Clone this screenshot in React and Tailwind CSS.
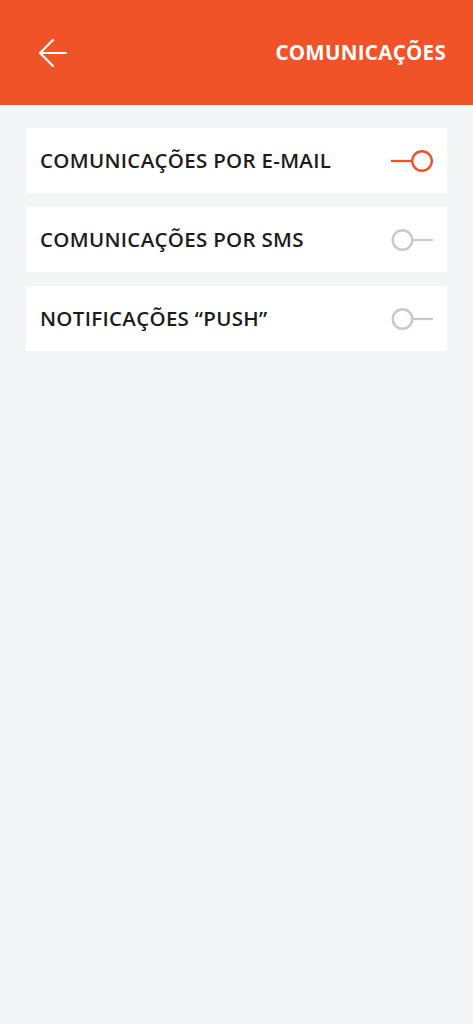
import React from "react";

function Toggle({ on }) {
  return on ? (
    <svg width="44" height="26" viewBox="0 0 44 26" fill="none">
      <line x1="0" y1="13" x2="20" y2="13" stroke="#F05328" strokeWidth="2.2" />
      <circle cx="31" cy="13" r="9.8" stroke="#F05328" strokeWidth="2.4" />
    </svg>
  ) : (
    <svg width="44" height="26" viewBox="0 0 44 26" fill="none">
      <circle cx="11.5" cy="13" r="9.8" stroke="#C9C9C9" strokeWidth="2.4" />
      <line x1="21.5" y1="13" x2="42" y2="13" stroke="#C9C9C9" strokeWidth="2.2" />
    </svg>
  );
}

function Row({ label, on }) {
  return (
    <div className="flex items-center justify-between bg-white h-[65px] pl-[14px] pr-[12px]">
      <span className="text-[20.5px] font-semibold text-[#1c1c1c] tracking-[0.3px]">{label}</span>
      <Toggle on={on} />
    </div>
  );
}

export default function App() {
  return (
    <div
      className="w-[473px] min-h-[1024px] bg-[#F4F5F7]"
      style={{ fontFamily: '"Open Sans", "Noto Sans", sans-serif' }}
    >
      <header className="h-[105px] bg-[#F05328] flex items-center justify-between pl-[39px] pr-[27px]">
        <svg width="28" height="28" viewBox="0 0 28 28" fill="none">
          <path d="M1 14 H27 M14 1 L1 14 L14 27" stroke="white" strokeWidth="2.2" strokeLinecap="round" strokeLinejoin="round" />
        </svg>
        <h1 className="text-[20.5px] font-bold text-white tracking-[0.3px]">COMUNICAÇÕES</h1>
      </header>
      <div className="flex flex-col gap-[14px] px-[26px] pt-[23px]">
        <Row label="COMUNICAÇÕES POR E-MAIL" on />
        <Row label="COMUNICAÇÕES POR SMS" />
        <Row label="NOTIFICAÇÕES “PUSH”" />
      </div>
    </div>
  );
}
